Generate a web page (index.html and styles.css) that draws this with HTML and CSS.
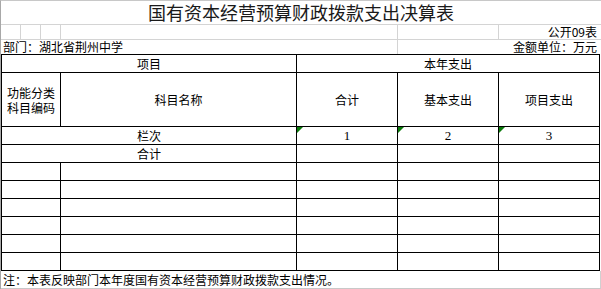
FILE: index.html
```html
<!DOCTYPE html>
<html lang="zh-CN">
<head>
<meta charset="utf-8">
<title>国有资本经营预算财政拨款支出决算表</title>
<link rel="stylesheet" href="styles.css">
</head>
<body>
<div class="sheet">
  <div class="title-row">国有资本经营预算财政拨款支出决算表</div>
  <div class="meta-row">
    <span class="g g20"></span><span class="g g20"></span><span class="g g20"></span>
    <span class="g gwide"></span>
    <span class="g g101"></span>
    <span class="meta-right">公开09表</span>
  </div>
  <div class="meta-row meta-row2">
    <span class="meta-left">部门：湖北省荆州中学</span>
    <span class="meta-right">金额单位：万元</span>
  </div>
  <div class="grid">
    <div class="c span2">项目</div>
    <div class="c span3">本年支出</div>

    <div class="c tall">功能分类<br>科目编码</div>
    <div class="c tall">科目名称</div>
    <div class="c tall">合计</div>
    <div class="c tall">基本支出</div>
    <div class="c tall">项目支出</div>

    <div class="c span2">栏次</div>
    <div class="c num"><i class="tri"></i>1</div>
    <div class="c num"><i class="tri"></i>2</div>
    <div class="c num"><i class="tri"></i>3</div>

    <div class="c span2">合计</div>
    <div class="c"></div><div class="c"></div><div class="c"></div>

    <div class="c"></div><div class="c"></div><div class="c"></div><div class="c"></div><div class="c"></div>
    <div class="c"></div><div class="c"></div><div class="c"></div><div class="c"></div><div class="c"></div>
    <div class="c"></div><div class="c"></div><div class="c"></div><div class="c"></div><div class="c"></div>
    <div class="c"></div><div class="c"></div><div class="c"></div><div class="c"></div><div class="c"></div>
    <div class="c"></div><div class="c"></div><div class="c"></div><div class="c"></div><div class="c"></div>
    <div class="c"></div><div class="c"></div><div class="c"></div><div class="c"></div><div class="c"></div>
  </div>
  <div class="note-row">注：本表反映部门本年度国有资本经营预算财政拨款支出情况。</div>
</div>
</body>
</html>
```

FILE: styles.css
```css
* { box-sizing: border-box; margin: 0; padding: 0; }
html, body { background: #ffffff; }
body {
  width: 601px;
  height: 289px;
  overflow: hidden;
  font-family: "Noto Sans CJK SC", "Liberation Sans", sans-serif;
  font-size: 12px;
  color: #000;
}
.sheet {
  width: 601px;
  height: 289px;
  border-left: 1px solid #a8a8a8;
  border-top: 1px solid #c8c8c8;
  display: flex;
  flex-direction: column;
}
.title-row {
  height: 24px;
  border-bottom: 1px solid #d4d4d4;
  text-align: center;
  font-size: 18px;
  line-height: 23px;
  color: #1a1a1a;
}
.meta-row {
  height: 15px;
  border-bottom: 1px solid #d4d4d4;
  display: flex;
  position: relative;
  line-height: 14px;
}
.meta-row2 {
  border-bottom: none;
  height: 14px;
}
.g { display: block; height: 100%; border-right: 1px solid #d4d4d4; flex: none; }
.g20 { width: 20px; }
.gwide { width: 337px; }
.g101 { width: 101px; }
.meta-row2::before {
  content: "";
  position: absolute;
  left: 396px;
  top: 0;
  width: 1px;
  height: 100%;
  background: #d4d4d4;
}
.meta-left { padding-left: 2px; position: relative; z-index: 1; }
.meta-right {
  position: absolute;
  right: 4px;
  top: 0;
  background: #fff;
  z-index: 1;
}
.grid {
  display: grid;
  width: 599px;
  grid-template-columns: 58px 235px 100px 100px 100px;
  grid-template-rows: 17px 53px repeat(8, 17px);
  gap: 1px;
  padding: 1px;
  background: #000;
  flex: none;
}
.c {
  background: #fff;
  display: flex;
  align-items: center;
  justify-content: center;
  text-align: center;
  line-height: 15px;
  position: relative;
}
.span2 { grid-column: span 2; }
.span3 { grid-column: span 3; }
.num { font-family: "Liberation Serif", "Noto Sans CJK SC", serif; font-size: 13px; }
.tri {
  position: absolute;
  left: 0;
  top: 0;
  width: 0;
  height: 0;
  border-top: 6px solid #0a7a0a;
  border-right: 6px solid transparent;
}
.note-row {
  height: 18px;
  width: 600px;
  border-right: 1px solid #d0d0d0;
  border-bottom: 1px solid #c8c8c8;
  padding-left: 2px;
  line-height: 17px;
}
```
